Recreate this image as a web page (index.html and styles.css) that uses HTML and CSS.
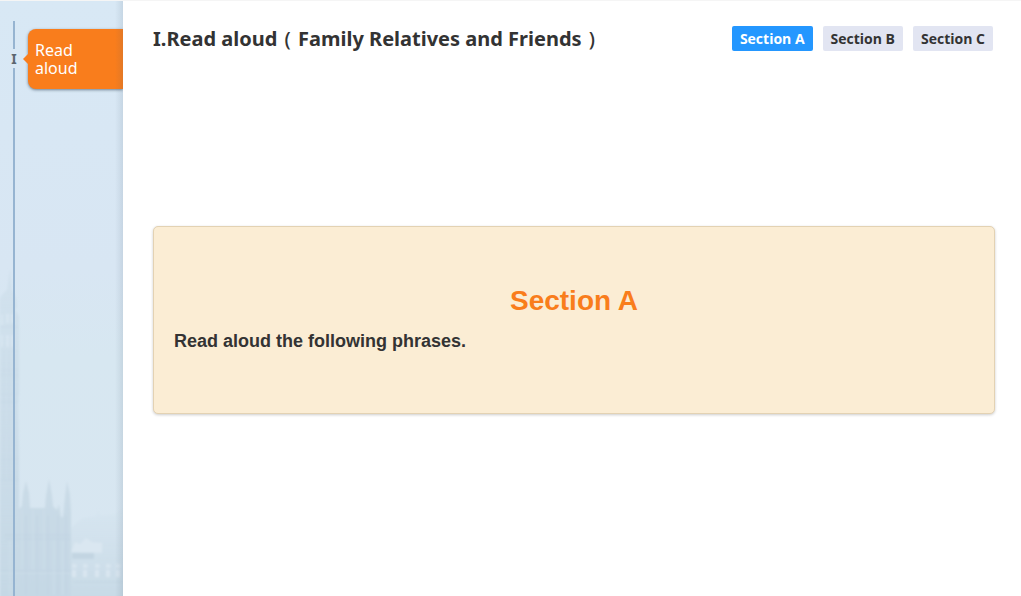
FILE: index.html
```html
<!DOCTYPE html>
<html lang="en">
<head>
<meta charset="utf-8">
<title>Read aloud</title>
<link rel="stylesheet" href="styles.css">
</head>
<body>
<div class="page">
  <aside class="sidebar">
    <svg class="skyline" viewBox="0 0 123 336" aria-hidden="true">
      <defs>
        <linearGradient id="mist" x1="0" y1="0" x2="0" y2="1">
          <stop offset="0" stop-color="#cbdce9" stop-opacity="0.5"/>
          <stop offset="1" stop-color="#c5d8e5"/>
        </linearGradient>
        <linearGradient id="stone" x1="0" y1="0" x2="0" y2="1">
          <stop offset="0" stop-color="#cadbe7"/>
          <stop offset="1" stop-color="#c5d8e5"/>
        </linearGradient>
        <linearGradient id="haze" x1="0" y1="0" x2="0" y2="1">
          <stop offset="0" stop-color="#cbdce8" stop-opacity="0.1"/>
          <stop offset="1" stop-color="#c7dae6"/>
        </linearGradient>
        <filter id="soft"><feGaussianBlur stdDeviation="1"/></filter>
      </defs>
      <g filter="url(#soft)">
        <path fill="url(#mist)" d="M0 38 3 34 7 30 10 8 12 30 16 37 17 46 15 50 19 56V130L18 143 19 200V340H0Z"/>
        <path fill="#dce9f3" fill-opacity="0.6" d="M1 55h2v10H1zM6 54h3v9H6zM11 54h3v9h-3zM1 75h2v12H1zM6 75h3v12H6zM11 75h3v12h-3z"/>
        <path fill="none" stroke="#bdd1e0" stroke-opacity="0.35" d="M0 67h18M0 110h19M0 115h19M0 134h19M0 142h19M0 199h19M0 220h19M4 90v130M9 90v130"/>
        <path fill="url(#haze)" d="M70 270 77 262 83 258 96 256 98 249 100 256 114 254 125 247V340H70Z"/>
        <path fill="url(#stone)" d="M18 250 22 246 23 233 26 221 29 233 30 248H45L46 236 49 219 52 235 53 246 57 250 59 244 61 257H63L65 237 67 221 70 235 71 252V340H18Z"/>
        <path fill="#dae7f1" d="m71 292 4-10 5 2 6-6 6 4 10 1v10Z"/>
        <path fill="#c3d5e2" d="M72 293h22v6H72z"/>
        <path fill="none" stroke="#d9e6f0" stroke-width="4" stroke-dasharray="4 2 7 3" d="M74 304v14M85 304v14M97 304v14M108 304v14M118 304v14"/>
        <path fill="none" stroke="#d7e5ef" stroke-width="2" d="M72 306h5M83 306h5M95 306h5M106 306h5M116 306h5"/>
        <path fill="none" stroke="#b9cedd" stroke-opacity="0.4" d="M4 275h67M5 279h66M0 311h71M26 255v80M37 255v80M48 255v80M58 255v80M66 255v80M73 322h50"/>
        <path fill="none" stroke="#d4e2ed" stroke-opacity="0.6" d="M0 313h71M22 250v60M33 250v60M44 250v60M54 280v55M63 280v55M10 280v55"/>
      </g>
    </svg>
    <div class="rail">
      <span class="rail-start"></span>
      <span class="rail-mark">I</span>
      <span class="rail-rest"></span>
    </div>
    <a class="part" href="#read-aloud">Read aloud</a>
  </aside>
  <main class="main" id="read-aloud">
    <header class="header">
      <h1 class="title">I.Read aloud <span class="paren">(</span> Family Relatives and Friends <span class="paren">)</span></h1>
      <nav class="tabs">
        <button class="tab tab-active" type="button">Section A</button>
        <button class="tab" type="button">Section B</button>
        <button class="tab" type="button">Section C</button>
      </nav>
    </header>
    <section class="card">
      <h2 class="card-title">Section A</h2>
      <p class="card-text">Read aloud the following phrases.</p>
    </section>
  </main>
</div>
</body>
</html>
```
FILE: styles.css
```css
* {
  box-sizing: border-box;
}

body {
  margin: 0;
  background: #fff;
  color: #333;
  font-family: "Noto Sans", "Open Sans", sans-serif;
}

.page {
  display: flex;
  min-height: 100vh;
  border-top: 1px solid #f5f5f5;
}

.sidebar {
  position: relative;
  display: flex;
  flex: none;
  align-items: flex-start;
  width: 123px;
  padding-top: 20px;
  overflow: hidden;
  background: linear-gradient(#d8e8f5, #d8e6f3 45%, #d7e7f1 60%, #d8e6f1);
}

.sidebar::after {
  content: "";
  position: absolute;
  inset: 0 0 0 auto;
  width: 8px;
  background: linear-gradient(to right, transparent, rgba(70, 90, 110, 0.12));
}

.skyline {
  position: absolute;
  left: 0;
  bottom: 0;
  width: 100%;
}

.rail {
  position: relative;
  display: flex;
  flex: none;
  flex-direction: column;
  align-self: stretch;
  align-items: center;
  width: 28px;
}

.rail-start,
.rail-rest {
  width: 2px;
  background: #96b4d1;
}

.rail-start {
  height: 28px;
}

.rail-rest {
  flex: 1;
}

.rail-mark {
  color: #5c6670;
  font-size: 14px;
  font-weight: 700;
  line-height: 19px;
}

.part {
  position: relative;
  flex: 1;
  margin-top: 8px;
  padding: 12px 40px 12px 7px;
  border-radius: 8px 0 0 8px;
  background: #f97d1c;
  box-shadow: 0 1px 3px rgba(40, 60, 80, 0.6);
  color: #fff;
  font-size: 16px;
  line-height: 18px;
  text-decoration: none;
}

.part::before {
  content: "";
  position: absolute;
  top: 25px;
  left: -5px;
  border: 5px solid transparent;
  border-left-width: 0;
  border-right-color: #f97d1c;
}

.main {
  flex: 1;
  padding: 20px 26px 20px 30px;
}

.header {
  display: flex;
  align-items: flex-start;
  justify-content: space-between;
  padding-right: 2px;
}

.title {
  margin: 0;
  font-size: 20px;
  line-height: 36px;
}

.paren {
  margin: 0 2px;
  font-weight: 500;
}

.tabs {
  display: flex;
  gap: 10px;
  padding-top: 5px;
}

.tab {
  padding: 0 8px;
  border: 0;
  border-radius: 2px;
  background: #e2e5f2;
  color: #333;
  font: 700 14px/25px "Open Sans", "Noto Sans", sans-serif;
}

.tab-active {
  background: #2497ff;
  color: #fff;
}

.card {
  margin-top: 169px;
  padding: 54px 20px 52px;
  border: 1px solid #e3d2b3;
  border-radius: 5px;
  background: #fbedd4;
  box-shadow: 0 1px 3px rgba(0, 0, 0, 0.2);
  font-family: "Liberation Sans", Arial, sans-serif;
}

.card-title {
  margin: 0;
  color: #f97d1c;
  font-size: 28px;
  line-height: 40px;
  text-align: center;
}

.card-text {
  margin: 0;
  font-size: 18px;
  font-weight: 700;
  line-height: 40px;
}
```
